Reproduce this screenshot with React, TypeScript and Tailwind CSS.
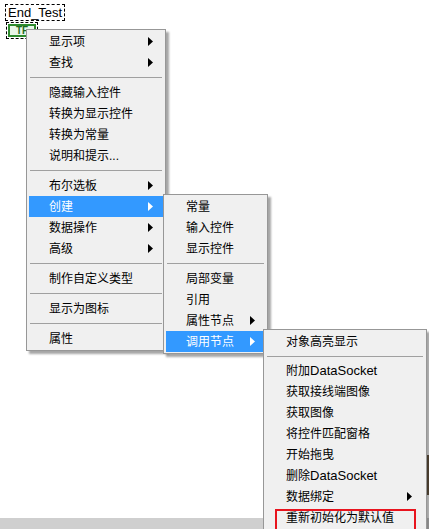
import { type ReactNode } from "react";

type Entry = { label: ReactNode; sub?: boolean; active?: boolean } | "sep";

const FONT = { fontFamily: '"Liberation Sans", "Noto Sans CJK SC", sans-serif' };

const ds = (prefix: string) => (
  <>
    {prefix}
    <span className="text-[13px]">DataSocket</span>
  </>
);

const mainItems: Entry[] = [
  { label: "显示项", sub: true },
  { label: "查找", sub: true },
  "sep",
  { label: "隐藏输入控件" },
  { label: "转换为显示控件" },
  { label: "转换为常量" },
  { label: "说明和提示..." },
  "sep",
  { label: "布尔选板", sub: true },
  { label: "创建", sub: true, active: true },
  { label: "数据操作", sub: true },
  { label: "高级", sub: true },
  "sep",
  { label: "制作自定义类型" },
  "sep",
  { label: "显示为图标" },
  "sep",
  { label: "属性" },
];

const createItems: Entry[] = [
  { label: "常量" },
  { label: "输入控件" },
  { label: "显示控件" },
  "sep",
  { label: "局部变量" },
  { label: "引用" },
  { label: "属性节点", sub: true },
  { label: "调用节点", sub: true, active: true },
];

const invokeItems: Entry[] = [
  { label: "对象高亮显示" },
  "sep",
  { label: ds("附加") },
  { label: "获取接线端图像" },
  { label: "获取图像" },
  { label: "将控件匹配窗格" },
  { label: "开始拖曳" },
  { label: ds("删除") },
  { label: "数据绑定", sub: true },
  { label: "重新初始化为默认值" },
];

function Arrow({ white }: { white?: boolean }) {
  return (
    <svg width="5" height="9" viewBox="0 0 5 9" className="shrink-0">
      <path d="M0 0 L5 4.5 L0 9 Z" fill={white ? "#ffffff" : "#000000"} />
    </svg>
  );
}

function Menu({
  items,
  className,
  arrowPad,
  sepH,
}: {
  items: Entry[];
  className: string;
  arrowPad: string;
  sepH: string;
}) {
  return (
    <div
      className={`absolute flex flex-col border border-[#979797] bg-[#f0f0f0] px-[2px] py-[1px] text-[12px] text-black shadow-[3px_3px_2px_rgba(0,0,0,0.35)] ${className}`}
      style={FONT}
    >
      {items.map((it, i) =>
        it === "sep" ? (
          <div key={i} className={`flex items-center px-[1px] ${sepH}`}>
            <div className="h-px w-full bg-[#a0a0a0]" />
          </div>
        ) : (
          <div
            key={i}
            className={`flex h-[21px] items-center justify-between pl-[20px] ${arrowPad} ${
              it.active ? "bg-[#3399ff] text-white" : ""
            }`}
          >
            <span className="whitespace-nowrap leading-none">{it.label}</span>
            {it.sub && <Arrow white={it.active} />}
          </div>
        )
      )}
    </div>
  );
}

export default function App() {
  return (
    <div className="relative flex h-[529px] w-[429px] flex-col overflow-hidden bg-white">
      {/* front panel label + boolean control */}
      <div className="flex flex-col items-start pl-[5px] pt-[4px]">
        <div
          className="border border-dashed border-black px-[2px] text-[13px] leading-[15px] text-black"
          style={FONT}
        >
          End_Test
        </div>
        <div className="ml-[1px] mt-[1px] border border-dashed border-black p-[1px]">
          <div
            className="flex h-[13px] w-[28px] items-center justify-center border-2 border-[#2e8a2e] bg-[#e8f6e8] text-[10px] font-bold leading-none text-[#1e6a1e]"
            style={FONT}
          >
            TF
          </div>
        </div>
      </div>

      <div className="flex-1" />
      <div className="h-[11px] w-full bg-[#cfcfcf]" />
      <div className="absolute right-0 top-[455px] h-[40px] w-[2px] bg-[#6b5a44]" />

      <Menu items={mainItems} className="left-[26px] top-[29px] w-[140px]" arrowPad="pr-[10px]" sepH="h-[9px]" />
      <Menu items={createItems} className="left-[163px] top-[194px] w-[105px]" arrowPad="pr-[10px]" sepH="h-[9px]" />
      <Menu items={invokeItems} className="left-[263px] top-[329px] w-[164px]" arrowPad="pr-[12px]" sepH="h-[8px]" />

      {/* red annotation box */}
      <div className="absolute left-[275px] top-[509px] h-[24px] w-[141px] border-2 border-[#e8141e]" />
    </div>
  );
}
